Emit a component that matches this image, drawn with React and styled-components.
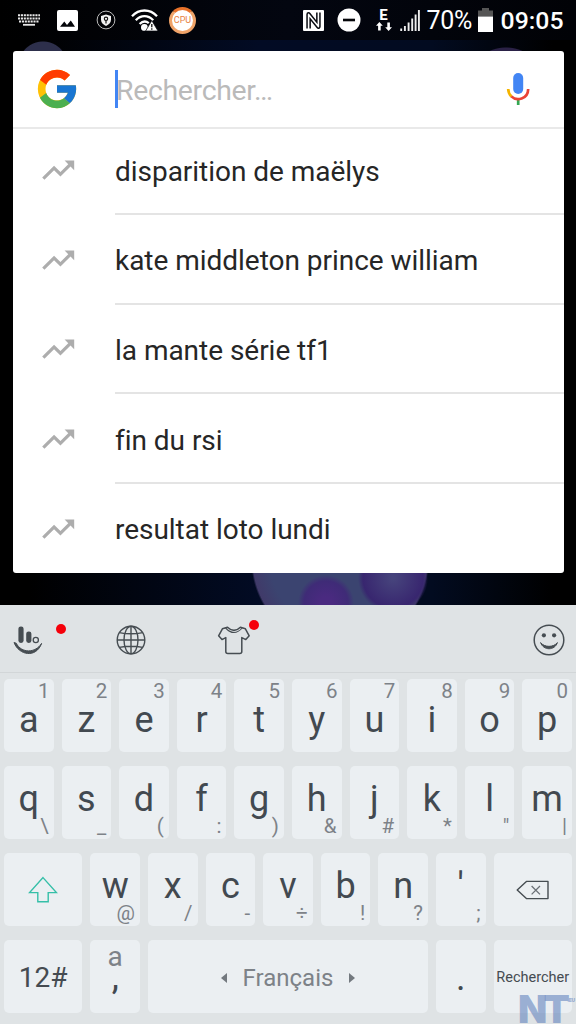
import React from "react";
import styled, { createGlobalStyle } from "styled-components";
import { FcGoogle } from "react-icons/fc";
import { MdTrendingUp } from "react-icons/md";

const suggestions = [
  "disparition de maëlys",
  "kate middleton prince william",
  "la mante série tf1",
  "fin du rsi",
  "resultat loto lundi",
];

const topRow = ["a1", "z2", "e3", "r4", "t5", "y6", "u7", "i8", "o9", "p0"];
const homeRow = ["q\\", "s_", "d(", "f:", "g)", "h&", "j#", "k*", 'l"', "m|"];
const bottomRow = ["w@", "x/", "c-", "v÷", "b!", "n?", "';"];

function LetterKey({ chars, top }) {
  return (
    <Key>
      <Main $line={top ? 83 : 67}>{chars[0]}</Main>
      <Alt $top={top}>{chars[1]}</Alt>
    </Key>
  );
}

function StatusBar() {
  return (
    <Status>
      <Glyph $ml={18} width="22" height="12" viewBox="0 0 22 12">
        <g stroke="#e8e8e8" strokeWidth="2" fill="none">
          <path d="M0 1.2H22M0 4.4H22M1 7.6H21" strokeDasharray="2.1 0.8" />
          <path d="M5 10.8H17" strokeWidth="1.8" />
        </g>
      </Glyph>
      <Glyph $ml={17} width="21" height="21" viewBox="0 0 21 21">
        <rect width="21" height="21" rx="2" fill="#fff" />
        <path d="M3 16.8L7.3 11.6L10 15L13.8 10.6L18 16.8Z" fill="#05060a" />
      </Glyph>
      <Glyph $ml={18} width="20" height="20" viewBox="0 0 20 20">
        <circle cx="10" cy="10" r="8.9" fill="none" stroke="#bbb" strokeWidth="1" />
        <path
          d="M10 4.6L15 6.1V9.6C15 12.8 12.9 14.8 10 16C7.1 14.8 5 12.8 5 9.6V6.1Z"
          fill="#f2f2f2"
        />
        <circle cx="10" cy="8.8" r="1.7" fill="none" stroke="#111" strokeWidth="1.1" />
        <path d="M10 10.4V13.4" stroke="#111" strokeWidth="1.2" />
      </Glyph>
      <Glyph $ml={15} width="28" height="24" viewBox="0 0 28 24">
        <g fill="none" stroke="#fff" strokeWidth="2.3">
          <path d="M1 8.2C8 .6 19 .6 26 8.2" />
          <path d="M4.8 12.2C10 6.8 17 6.8 22.2 12.2" />
          <path d="M8.6 16C11.8 12.8 15 12.8 17.8 15.2" />
        </g>
        <circle cx="13.4" cy="19.4" r="3.4" fill="#fff" />
        <path d="M20.8 12.6L27 23H14.6Z" fill="#fff" stroke="#05060a" strokeWidth=".7" />
        <path d="M20.8 16V19.3M20.8 20.3V21.8" stroke="#111" strokeWidth="1.3" />
      </Glyph>
      <Cpu>CPU</Cpu>
      <Spacer />
      <Glyph width="21" height="21" viewBox="0 0 21 21">
        <rect width="21" height="21" rx="1" fill="#fff" />
        <g fill="none" strokeLinejoin="round">
          <path d="M5.6 18.4V4.4L15.4 16.6V2.6" stroke="#080a10" strokeWidth="4.6" />
          <path d="M5.6 19V4.4L15.4 16.6V2" stroke="#fff" strokeWidth="1.6" />
        </g>
      </Glyph>
      <Glyph $ml={13} width="24" height="24" viewBox="0 0 24 24">
        <circle cx="12" cy="12" r="11.5" fill="#fff" />
        <rect x="6" y="10.7" width="12" height="2.6" fill="#05060a" />
      </Glyph>
      <Network>
        <span>E</span>
        <svg width="16" height="9" viewBox="0 0 16 9">
          <path
            d="M3.4 0L6.8 3.8H4.7V8.5H2.1V3.8H0ZM11.3 .5H13.9V5.2H16L12.6 9L9.2 5.2H11.3Z"
            fill="#fff"
          />
        </svg>
      </Network>
      <Glyph $ml={8} width="20" height="22" viewBox="0 0 20 22">
        <path
          d="M1.2 19.5V22M4.9 17V22M8.6 13.5V22M12.2 9.5V22M15.6 5.5V22M18.9 1V22"
          stroke="#eee"
          strokeWidth="1.9"
        />
      </Glyph>
      <Percent>70%</Percent>
      <Glyph $ml={6} width="15" height="24" viewBox="0 0 15 24">
        <path d="M0 2.5H4V0H11V2.5H15V8.5H0Z" fill="#555" />
        <rect y="8.5" width="15" height="15.5" fill="#fff" />
      </Glyph>
      <Clock>09:05</Clock>
    </Status>
  );
}

function Toolbar() {
  return (
    <Tools>
      <Tool $ml={13} width="30" height="32" viewBox="0 0 30 32">
        <rect x="5.4" y="2.4" width="5.2" height="16.6" rx="2.4" fill="#464d52" />
        <rect x="13.2" y="7.4" width="5.2" height="11.6" rx="2.4" fill="#464d52" />
        <circle cx="22.8" cy="16" r="2.6" fill="none" stroke="#464d52" strokeWidth="1.3" />
        <path d="M1 18.5C6 31.5 23 34.5 28.6 19.4C22.5 29.2 8.6 29.6 3.2 19.2Z" fill="#464d52" stroke="#464d52" strokeLinejoin="round" />
      </Tool>
      <Dot $left={56} $top={19} />
      <Tool $ml={72.5} width="30" height="30" viewBox="0 0 30 30">
        <g fill="none" stroke="#464d52" strokeWidth="1.4">
          <circle cx="15" cy="15" r="13.8" />
          <ellipse cx="15" cy="15" rx="7" ry="13.8" />
          <path d="M15 1V29M1 15H29M3.3 7.6Q15 10 26.7 7.6M3.3 22.4Q15 20 26.7 22.4" />
        </g>
      </Tool>
      <Tool $ml={71.5} width="34" height="32" viewBox="0 0 34 32">
        <g fill="none" stroke="#464d52" strokeWidth="1.5" strokeLinejoin="round">
          <path d="M10.5 3.2L5.4 4.8L1.6 11.8L5 15.6L8.8 13.6V27.4Q8.8 29.4 10.8 29.4H22.8Q24.8 29.4 24.8 27.4V13.6L28.8 15.6L32.2 11.8L28.4 4.8L23.4 3.2Q17 9.6 10.5 3.2Z" />
          <path d="M8.6 4Q17 13 25.2 4" strokeWidth="1.1" />
        </g>
      </Tool>
      <Dot $left={249} $top={15} />
      <Spacer />
      <Tool width="32" height="32" viewBox="0 0 32 32">
        <circle cx="16" cy="16" r="14.8" fill="none" stroke="#464d52" strokeWidth="1.5" />
        <circle cx="10.9" cy="11.3" r="2.1" fill="#464d52" />
        <circle cx="21.1" cy="11.3" r="2.1" fill="#464d52" />
        <path d="M7.6 18.6C10.4 26.8 21.8 26.8 24.4 18.6C20.6 23.6 11.4 23.6 7.6 18.6Z" fill="#464d52" stroke="#464d52" strokeLinejoin="round" />
      </Tool>
    </Tools>
  );
}

export default function App() {
  return (
    <Screen>
      <GlobalStyle />
      <StatusBar />
      <Card>
        <SearchRow>
          <FcGoogle size={46} />
          <Caret />
          <Placeholder>Rechercher…</Placeholder>
          <Spacer />
          <svg width="24" height="34" viewBox="0 0 24 34">
            <rect x="7.2" y="1" width="10" height="21" rx="5" fill="#4285f4" />
            <g fill="none" strokeWidth="2.7">
              <path d="M12.2 27V33" stroke="#34a853" />
              <path d="M2.2 17C2.3 20.4 3.5 22.8 5.5 24.6" stroke="#f4b400" />
              <path d="M5.3 24.4C10.6 29.6 22 27.4 22.2 17" stroke="#ea4335" />
            </g>
          </svg>
        </SearchRow>
        {suggestions.map((text, index) => (
          <Suggestion key={text} $first={index === 0}>
            <MdTrendingUp size={38.4} color="#adadad" />
            <Label>{text}</Label>
          </Suggestion>
        ))}
      </Card>
      <Keyboard>
        <Toolbar />
        <Keys>
          <Row>
            {topRow.map((chars) => (
              <LetterKey key={chars} chars={chars} top />
            ))}
          </Row>
          <Row>
            {homeRow.map((chars) => (
              <LetterKey key={chars} chars={chars} />
            ))}
          </Row>
          <Row>
            <Key $width={78.4}>
              <CenterIcon width="30" height="28" viewBox="0 0 30 28">
                <path d="M15 1.6L28.4 16.6H20.2V25.8H9.8V16.6H1.6Z" fill="none" stroke="#35bfa8" strokeWidth="1.4" />
              </CenterIcon>
            </Key>
            {bottomRow.map((chars) => (
              <LetterKey key={chars} chars={chars} />
            ))}
            <Key $width={78.4}>
              <CenterIcon width="34" height="20" viewBox="0 0 34 20">
                <path d="M1.2 10L10.4 1.4H32V18.6H10.4Z" fill="none" stroke="#464d52" strokeWidth="1.4" strokeLinejoin="round" />
                <path d="M15.6 6L24 14.4M24 6L15.6 14.4" stroke="#6a7076" strokeWidth="1.3" />
              </CenterIcon>
            </Key>
          </Row>
          <Row>
            <Key $width={78.4}>
              <Word $size={28}>12#</Word>
            </Key>
            <Key>
              <Hint>a</Hint>
              <Main $line={75}>,</Main>
            </Key>
            <Key $width={280}>
              <Space>
                <Arrow />
                <Word $size={24} $soft>Français</Word>
                <Arrow $right />
              </Space>
            </Key>
            <Key>
              <Main $line={77}>.</Main>
            </Key>
            <Key $width={78.4}>
              <Word $size={14.5}>Rechercher</Word>
            </Key>
          </Row>
        </Keys>
      </Keyboard>
      <Watermark>
        NT<small>.EU</small>
      </Watermark>
    </Screen>
  );
}

const GlobalStyle = createGlobalStyle`
  * {
    box-sizing: border-box;
  }
  body {
    margin: 0;
    background: #000;
    font-family: Roboto, "Liberation Sans", sans-serif;
  }
  svg {
    flex-shrink: 0;
    display: block;
  }
`;

const Screen = styled.div`
  position: relative;
  width: 576px;
  height: 1024px;
  overflow: hidden;
  display: flex;
  flex-direction: column;
  background:
    radial-gradient(circle at 43px 66px, #2d2f4b 24px, transparent 25px),
    radial-gradient(circle at 506px 88px, #2a2146 40px, transparent 41px),
    radial-gradient(circle at 326px 603px, #4a2a80 6px, #3f2b77 22px, transparent 28px),
    radial-gradient(circle at 393px 578px, #46437c 2px, #38266f 30px, transparent 35px),
    radial-gradient(circle at 340px 560px, #3b4470 70px, #403a69 87px, transparent 89px),
    linear-gradient(90deg, #000 5%, #020b24 45%, #020b20 75%, #000 96%);
`;

const Spacer = styled.div`
  flex: 1;
`;

const Status = styled.div`
  height: 51px;
  padding: 0 12.5px 11px 0;
  display: flex;
  align-items: center;
  color: #fff;
  background: linear-gradient(90deg, #000, #030610 50%, #010206);
  background-size: 100% 40px;
  background-repeat: no-repeat;
`;

const Glyph = styled.svg`
  margin-left: ${({ $ml }) => $ml || 0}px;
`;

const Cpu = styled.div`
  width: 27px;
  height: 27px;
  margin-left: 10px;
  border-radius: 50%;
  border: 3px solid #f0a368;
  border-top-color: #e8722a;
  background: #fff;
  color: #e8813f;
  font-size: 9px;
  line-height: 21px;
  display: flex;
  justify-content: center;
`;

const Network = styled.div`
  width: 16px;
  margin-left: 15px;
  display: flex;
  flex-direction: column;
  align-items: center;
  span {
    font-size: 15px;
    font-weight: 700;
    line-height: 13px;
  }
`;

const Percent = styled.div`
  margin-left: 7px;
  width: 45px;
  font-size: 25px;
  line-height: 42px;
  letter-spacing: -0.4px;
  padding-top: 2px;
  white-space: nowrap;
`;

const Clock = styled.div`
  margin-left: 8px;
  font-size: 24.8px;
  font-weight: 500;
  line-height: 42px;
  padding-top: 2px;
`;

const Card = styled.div`
  width: 551px;
  height: 522px;
  margin-left: 12.5px;
  border-radius: 3px;
  background: #fff;
  overflow: hidden;
`;

const SearchRow = styled.div`
  height: 78px;
  padding: 0 34px 0 21.5px;
  border-bottom: 2px solid #e9e9e9;
  display: flex;
  align-items: center;
`;

const Caret = styled.div`
  width: 3px;
  height: 38px;
  margin-left: 35px;
  background: #4285f4;
`;

const Placeholder = styled.div`
  margin-left: -2px;
  padding-top: 3px;
  color: #bababa;
  font-size: 28.4px;
  letter-spacing: -0.3px;
`;

const Suggestion = styled.div`
  height: ${({ $first }) => ($first ? 86 : 89.7)}px;
  padding-left: 26px;
  display: flex;
  align-items: center;
  > svg {
    margin-top: ${({ $first }) => ($first ? -3 : 0)}px;
  }
  > div {
    padding-top: ${({ $first }) => ($first ? 0 : 4)}px;
  }
`;

const Label = styled.div`
  flex: 1;
  margin-left: 38.1px;
  align-self: stretch;
  display: flex;
  align-items: center;
  color: #262626;
  font-size: 28px;
  letter-spacing: -0.03px;
  border-bottom: 2px solid #e4e4e4;
  ${Suggestion}:last-child & {
    border-bottom-color: transparent;
  }
`;

const Keyboard = styled.div`
  margin-top: 32.5px;
  height: 419px;
  background: #dfe3e5;
`;

const Tools = styled.div`
  position: relative;
  height: 68px;
  padding: 2px 11px 0 0;
  border-bottom: 1px solid #d2d6d8;
  display: flex;
  align-items: center;
`;

const Tool = styled.svg`
  margin-left: ${({ $ml }) => $ml || 0}px;
`;

const Dot = styled.i`
  position: absolute;
  left: ${({ $left }) => $left}px;
  top: ${({ $top }) => $top}px;
  width: 10px;
  height: 10px;
  border-radius: 50%;
  background: #f5000a;
`;

const Keys = styled.div`
  padding: 5.5px 4px 0;
  display: flex;
  flex-direction: column;
  gap: 14.2px;
`;

const Row = styled.div`
  display: flex;
  gap: 8px;
`;

const Key = styled.div`
  width: ${({ $width }) => $width || 49.6}px;
  height: 73px;
  flex-shrink: 0;
  border-radius: 5px;
  background: #ebeff2;
  display: grid;
  justify-items: center;
  > * {
    grid-area: 1 / 1;
  }
`;

const Main = styled.span`
  align-self: start;
  height: 73px;
  color: #424950;
  font-size: 36px;
  line-height: ${({ $line }) => $line}px;
`;

const Alt = styled.span`
  align-self: ${({ $top }) => ($top ? "start" : "end")};
  justify-self: end;
  padding-right: ${({ $top }) => ($top ? 4 : 5)}px;
  color: #7d8288;
  font-size: 20.5px;
  line-height: ${({ $top }) => ($top ? 24 : 25)}px;
`;

const Hint = styled.span`
  color: #7d8288;
  font-size: 28px;
  line-height: 34px;
`;

const Word = styled.span`
  align-self: center;
  padding-top: 2px;
  color: ${({ $soft }) => ($soft ? "#7d8288" : "#454b51")};
  font-size: ${({ $size }) => $size}px;
  white-space: nowrap;
`;

const CenterIcon = styled.svg`
  align-self: center;
`;

const Space = styled.div`
  display: flex;
  align-items: center;
  gap: 16px;
`;

const Arrow = styled.i`
  margin-top: 2px;
  border: 5px solid transparent;
  border-width: 5px 0;
  ${({ $right }) => ($right ? "border-left" : "border-right")}: 6px solid #73797f;
`;

const Watermark = styled.div`
  position: absolute;
  left: 518px;
  top: 990px;
  color: rgba(100, 132, 190, 0.6);
  font-family: Inter, sans-serif;
  font-size: 38px;
  font-weight: 900;
  line-height: 38px;
  letter-spacing: -3.5px;
  white-space: nowrap;
  small {
    margin-left: 1px;
    font-size: 5px;
    letter-spacing: -0.4px;
    line-height: 6px;
    vertical-align: 21px;
  }
`;
